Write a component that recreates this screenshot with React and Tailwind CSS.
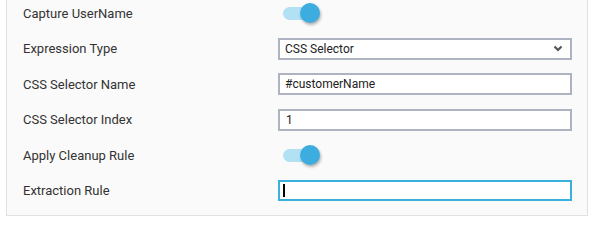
import React from "react";

function Toggle() {
  return (
    <div className="relative w-[38px] h-[22px] flex items-center">
      <div className="absolute left-[5px] w-[33px] h-[13px] rounded-full bg-[#b3e1f4]" />
      <div className="absolute left-[22px] w-[20px] h-[20px] rounded-full bg-[#3daddf] shadow-[1px_2px_3px_rgba(0,0,0,0.3)]" />
    </div>
  );
}

function Row({ label, children }) {
  return (
    <div className="flex items-center h-[22px]">
      <div className="w-[255px] text-[13px] text-[#333333] leading-none">{label}</div>
      <div className="flex-1">{children}</div>
    </div>
  );
}

export default function App() {
  return (
    <div className="bg-white w-[590px] h-[221px]" style={{ fontFamily: "Roboto, 'Noto Sans', sans-serif" }}>
      <div className="ml-[6px] w-[582px] h-[216px] bg-[#fafafa] border-x border-b border-[#e1e1e1] pl-[16px] pr-[15px] pt-[2px] flex flex-col gap-[13.6px]">
        <Row label="Capture UserName">
          <Toggle />
        </Row>
        <Row label="Expression Type">
          <div className="h-[22px] bg-white border-2 border-[#aeb3c2] flex items-center justify-between pl-[5px] pr-[7px] text-[12px] text-[#222]">
            <span>CSS Selector</span>
            <svg width="10" height="7" viewBox="0 0 10 7">
              <path d="M1.5 1.5 L5 5 L8.5 1.5" fill="none" stroke="#555" strokeWidth="2.2" />
            </svg>
          </div>
        </Row>
        <Row label="CSS Selector Name">
          <div className="h-[22px] bg-white border-2 border-[#aeb3c2] flex items-center pl-[5px] text-[12px] text-[#222]">
            #customerName
          </div>
        </Row>
        <Row label="CSS Selector Index">
          <div className="h-[22px] bg-white border-2 border-[#aeb3c2] flex items-center pl-[6px] text-[12px] text-[#222]">
            1
          </div>
        </Row>
        <Row label="Apply Cleanup Rule">
          <Toggle />
        </Row>
        <Row label="Extraction Rule">
          <div className="h-[21px] bg-white border-2 border-[#3ab0df] flex items-center pl-[3px]">
            <div className="w-[1.5px] h-[13px] bg-black" />
          </div>
        </Row>
      </div>
    </div>
  );
}
